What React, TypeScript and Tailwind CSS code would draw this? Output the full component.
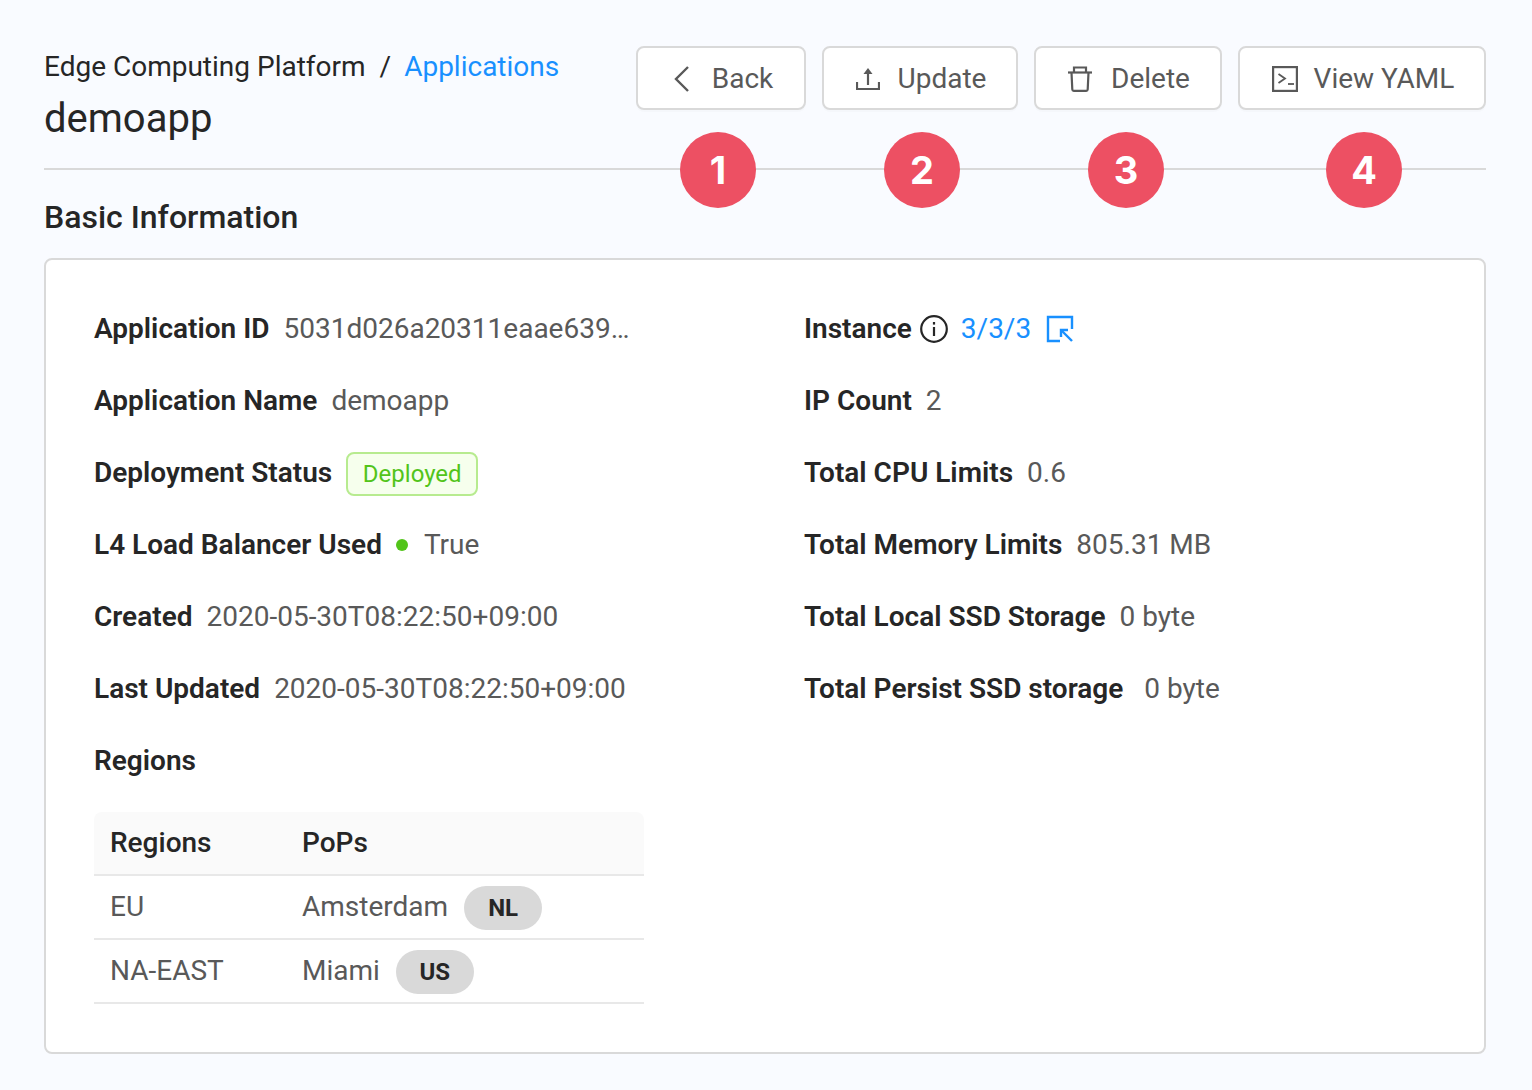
import { ReactNode } from "react";

const leftRows = [
  { label: "Application ID", value: "5031d026a20311eaae639…" },
  { label: "Application Name", value: "demoapp" },
];

const rightRows = [
  { label: "IP Count", value: "2" },
  { label: "Total CPU Limits", value: "0.6" },
  { label: "Total Memory Limits", value: "805.31 MB" },
  { label: "Total Local SSD Storage", value: "0 byte" },
];

const regions = [
  { region: "EU", pop: "Amsterdam", code: "NL" },
  { region: "NA-EAST", pop: "Miami", code: "US" },
];

function Row({ label, children }: { label: string; children?: ReactNode }) {
  return (
    <div className="flex items-center h-[72px] gap-[14px] whitespace-nowrap">
      <span className="font-semibold text-[#262626]">{label}</span>
      {children}
    </div>
  );
}

function ActionButton({ icon, text, className }: { icon: ReactNode; text: string; className: string }) {
  return (
    <button
      type="button"
      className={`h-16 pt-0.5 flex items-center justify-center bg-white border-2 border-[#d9d9d9] rounded-lg text-[28px] text-[#595959] shadow-[0_2px_0_rgba(0,0,0,0.015)] ${className}`}
    >
      {icon}
      {text}
    </button>
  );
}

function Marker({ n, className }: { n: number; className: string }) {
  return (
    <div
      className={`absolute top-[132px] w-[76px] h-[76px] rounded-full bg-[#ed5063] text-white flex items-center justify-center text-[38px] font-bold font-['Inter',sans-serif] ${className}`}
    >
      {n}
    </div>
  );
}

export default function App() {
  return (
    <div className="relative w-[1532px] h-[1090px] bg-[#f9fbff] pl-[44px] pr-[46px] pt-[46px] font-['Roboto',sans-serif] text-[28px] text-[#595959] overflow-hidden">
      <div className="flex justify-between h-[124px] border-b-2 border-[#d9d9d9]">
        <div className="pt-px">
          <div className="h-10 flex items-center text-[#262626] whitespace-nowrap">
            Edge Computing Platform
            <span className="ml-[14px] mr-[13px]">/</span>
            <span className="text-[#1890ff]">Applications</span>
          </div>
          <div className="text-[40px] leading-[64px] text-[#262626]">demoapp</div>
        </div>
        <div className="flex gap-4 h-16">
          <ActionButton
            className="w-[170px] pl-1 gap-[23px]"
            text="Back"
            icon={
              <svg width="16" height="26" viewBox="0 0 16 26" fill="none" stroke="currentColor" strokeWidth="2.4">
                <path d="M15 1 L3 13 L15 25" />
              </svg>
            }
          />
          <ActionButton
            className="w-[196px] pl-0.5 gap-[18px]"
            text="Update"
            icon={
              <svg width="24" height="24" viewBox="0 0 24 24" fill="none" stroke="currentColor" strokeWidth="2.2">
                <path d="M1 15v7h22v-7" />
                <path d="M12 5v13" />
                <path d="M12 1l-4.500 6h9z" fill="currentColor" stroke="none" />
              </svg>
            }
          />
          <ActionButton
            className="w-[188px] pl-0.5 gap-[19px]"
            text="Delete"
            icon={
              <svg width="24" height="26" viewBox="0 0 24 26" fill="none" stroke="currentColor" strokeWidth="2.200">
                <path d="M0 6.500h24" />
                <path d="M6 6.500V1.500h12v5" />
                <path d="M3.500 6.500l.8 17a1.500 1.500 0 0 0 1.500 1.400h12.400a1.500 1.500 0 0 0 1.500-1.400l.8-17" strokeLinejoin="round" />
              </svg>
            }
          />
          <ActionButton
            className="w-[248px] pl-0.5 gap-4"
            text="View YAML"
            icon={
              <svg width="26" height="26" viewBox="0 0 26 26" fill="none" stroke="currentColor" strokeWidth="2.200">
                <rect x="1.100" y="1.100" width="23.800" height="23.800" />
                <path d="M6.500 8l6.500 4.500L6.500 17" strokeWidth="1.800" />
                <path d="M16 18h6" strokeWidth="1.800" />
              </svg>
            }
          />
        </div>
      </div>

      <div className="text-[32px] leading-[48px] font-medium text-[#262626] mt-[23px] mb-[17px]">Basic Information</div>

      <div className="h-[796px] bg-white border-2 border-[#d9d9d9] rounded-lg px-[48px] pt-[33px] flex">
        <div className="w-[710px]">
          {leftRows.map((row) => (
            <Row key={row.label} label={row.label}>
              <span>{row.value}</span>
            </Row>
          ))}
          <Row label="Deployment Status">
            <span className="h-11 w-[132px] mt-0.5 flex items-center justify-center bg-[#f6ffed] border-2 border-[#b7eb8f] rounded-lg text-[#52c41a] text-[24px]">
              Deployed
            </span>
          </Row>
          <Row label="L4 Load Balancer Used">
            <span className="w-3 h-3 rounded-full bg-[#52c41a] mr-[2px]" />
            <span>True</span>
          </Row>
          <Row label="Created">
            <span>2020-05-30T08:22:50+09:00</span>
          </Row>
          <Row label="Last Updated">
            <span>2020-05-30T08:22:50+09:00</span>
          </Row>
          <Row label="Regions" />

          <div className="w-[550px] mt-[15px]">
            <div className="flex items-center h-16 bg-[#fafafa] rounded-t-lg border-b-2 border-[#e8e8e8] font-medium text-[#262626]">
              <span className="w-[192px] pl-4">Regions</span>
              <span className="pl-4">PoPs</span>
            </div>
            {regions.map((r) => (
              <div key={r.region} className="flex items-center h-16 border-b-2 border-[#e8e8e8]">
                <span className="w-[192px] pl-4">{r.region}</span>
                <span className="pl-4">{r.pop}</span>
                <span className="ml-4 mt-0.5 w-[78px] h-11 rounded-full bg-[#d9d9d9] flex items-center justify-center text-[24px] font-bold text-[#262626]">
                  {r.code}
                </span>
              </div>
            ))}
          </div>
        </div>

        <div>
          <Row label="Instance">
            <span className="flex items-center -ml-1.5 gap-[13px]">
              <svg width="28" height="28" viewBox="0 0 28 28" fill="none" stroke="#262626" strokeWidth="2.200">
                <circle cx="14" cy="14" r="12.800" />
                <path d="M14 12v9" />
                <path d="M14 7v2.600" />
              </svg>
              <span className="text-[#1890ff]">3/3/3</span>
              <svg width="28" height="28" viewBox="0 0 28 28" fill="none" stroke="#1890ff" strokeWidth="2.400" className="ml-[2px]">
                <path d="M26 14V2H2v24h12" />
                <path d="M26 26L16 16" />
                <path d="M15 22v-7h7" />
              </svg>
            </span>
          </Row>
          {rightRows.map((row) => (
            <Row key={row.label} label={row.label}>
              <span>{row.value}</span>
            </Row>
          ))}
          <Row label="Total Persist SSD storage">
            <span className="ml-[7px]">0 byte</span>
          </Row>
        </div>
      </div>

      <Marker n={1} className="left-[680px]" />
      <Marker n={2} className="left-[884px]" />
      <Marker n={3} className="left-[1088px]" />
      <Marker n={4} className="left-[1326px]" />
    </div>
  );
}
